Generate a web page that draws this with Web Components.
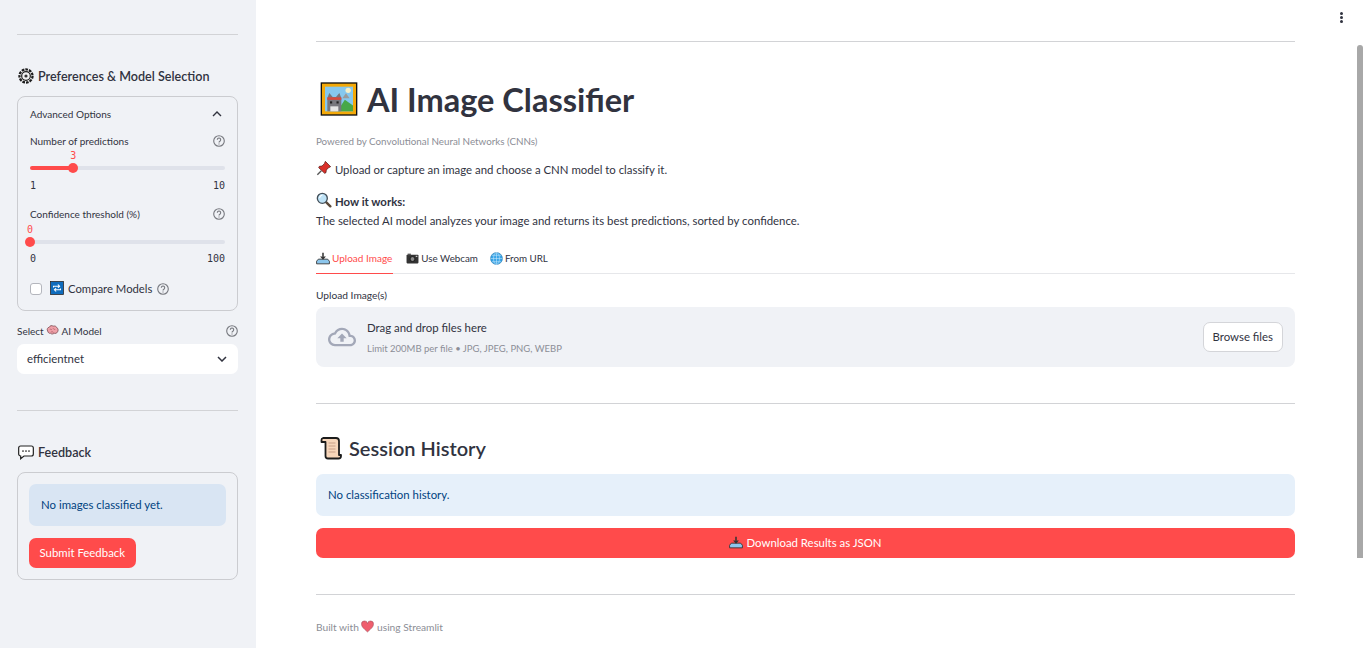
<!DOCTYPE html>
<html lang="en">
<head>
<meta charset="utf-8">
<title>AI Image Classifier</title>
<style>
  html, body { margin: 0; height: 100%; overflow: hidden; }
  body { font-family: "Lato", "Noto Sans", sans-serif; color: #31333f; background: #fff; }
</style>
</head>
<body>
<app-shell>
  <app-sidebar slot="sidebar">
    <app-rule style="margin-top:34px"></app-rule>
    <app-heading icon="gear" size="12.6" line="20" gap="4" pad="1" style="margin-top:31px">Preferences &amp; Model Selection</app-heading>
    <app-panel pad="12" top="10" bottom="14" style="margin-top:10px">
      <app-expander-head>Advanced Options</app-expander-head>
      <app-slider label="Number of predictions" min="1" max="10" value="3" style="margin-top:13px"></app-slider>
      <app-slider label="Confidence threshold (%)" min="0" max="100" value="0" style="margin-top:15px;--label-gap:3px;--ends-gap:9px"></app-slider>
      <app-check style="margin-top:17px"><app-emoji name="repeat" size="14" style="margin-right:4px"></app-emoji>Compare Models</app-check>
    </app-panel>
    <app-select value="efficientnet" style="margin-top:13px">Select <app-emoji name="brain" size="13"></app-emoji> AI Model</app-select>
    <app-rule style="margin-top:36px"></app-rule>
    <app-heading icon="speech" size="12.6" line="20" gap="4" pad="1" style="margin-top:31px">Feedback</app-heading>
    <app-panel pad="11" top="11" bottom="11" style="margin-top:10px">
      <app-alert tone="side">No images classified yet.</app-alert>
      <app-button style="margin-top:12px">Submit Feedback</app-button>
    </app-panel>
  </app-sidebar>

  <app-main slot="main">
    <app-rule style="margin-top:41px"></app-rule>
    <app-title style="margin-top:37px">AI Image Classifier</app-title>
    <app-caption style="margin-top:15px">Powered by Convolutional Neural Networks (CNNs)</app-caption>
    <app-text style="margin-top:12px"><app-emoji name="pin" size="16"></app-emoji> Upload or capture an image and choose a CNN model to classify it.</app-text>
    <app-text style="margin-top:13px"><app-emoji name="lens" size="16"></app-emoji> <b>How it works:</b><br>The selected AI model analyzes your image and returns its best predictions, sorted by confidence.</app-text>
    <app-tabs style="margin-top:14px">
      <app-tab active style="font-size:10px;margin-right:2px"><app-emoji name="tray" size="14"></app-emoji> Upload Image</app-tab>
      <app-tab><app-emoji name="camera" size="13"></app-emoji> Use Webcam</app-tab>
      <app-tab><app-emoji name="globe" size="13"></app-emoji> From URL</app-tab>
    </app-tabs>
    <app-dropzone label="Upload Image(s)" style="margin-top:14px"></app-dropzone>
    <app-rule style="margin-top:36px"></app-rule>
    <app-heading icon="scroll" size="20" line="30" emoji="24" gap="7" pad="2" style="margin-top:29px">Session History</app-heading>
    <app-alert tone="main" style="margin-top:11px">No classification history.</app-alert>
    <app-button wide style="margin-top:12px"><app-emoji name="tray" size="14"></app-emoji> Download Results as JSON</app-button>
    <app-rule style="margin-top:36px"></app-rule>
    <app-caption style="margin-top:25px;font-size:10.200px">Built with <app-emoji name="heart" size="13"></app-emoji> using Streamlit</app-caption>
  </app-main>
</app-shell>

<script>
const EMOJI = {
  gear: `<circle cx="12" cy="12" r="9.800" fill="#fff" stroke="#1d1d1d" stroke-width="3.400" stroke-dasharray="4 1.500"/><circle cx="12" cy="12" r="6.500" fill="#f2f2f2" stroke="#1d1d1d" stroke-width="1.800"/><circle cx="12" cy="12" r="2.400" fill="#333"/>`,
  speech: `<path d="M4 3h16a3 3 0 0 1 3 3v9a3 3 0 0 1-3 3H9l-5 4v-4a3 3 0 0 1-3-3V6a3 3 0 0 1 3-3z" fill="#fff" stroke="#222" stroke-width="1.800"/><circle cx="7.500" cy="10.500" r="1.300" fill="#222"/><circle cx="12" cy="10.500" r="1.300" fill="#222"/><circle cx="16.500" cy="10.500" r="1.300" fill="#222"/>`,
  frame: `<rect x="1" y="2" width="22" height="20" fill="#111"/><rect x="1.800" y="2.800" width="20.400" height="18.400" fill="#f4a908"/><rect x="3.600" y="4.600" width="16.800" height="14.800" fill="#86c8ee"/><path d="M11 19.400l4.500-7 4.900 3.500v3.500z" fill="#47a847"/><circle cx="17.500" cy="6.800" r="1.600" fill="#f5efc8"/><path d="M14 11.500l2.200-3 2.200 3z" fill="#9a9a9a"/><path d="M5 19.400v-8l1.200-3 2 2.400h2l2-2.400 1.200 3v8z" fill="#77777d"/><rect x="5" y="11" width="8.400" height="1.500" fill="#d84a3c"/><rect x="6.600" y="13.400" width="1.300" height="1.300" fill="#222"/><rect x="10.500" y="13.400" width="1.300" height="1.300" fill="#222"/><path d="M6.800 16.400h4.800v3H6.800z" fill="#e5e5e5"/>`,
  pin: `<path d="M14 2l8 8-3 1.500-3.500 3.500-.5 4-2 1L4 11.500l1-2 4-.5L12.500 5.500z" fill="#d9302a" stroke="#4a1512" stroke-width="1"/><path d="M8 16l-6 6" stroke="#555" stroke-width="2"/>`,
  lens: `<path d="M14 14l7.500 7.500" stroke="#5b4a3a" stroke-width="3.600" stroke-linecap="round"/><circle cx="9.500" cy="9.500" r="7.500" fill="#bfe3f7" stroke="#44505a" stroke-width="2"/><path d="M5.500 9a4 4 0 0 1 4-4" stroke="#fff" stroke-width="1.600" fill="none"/>`,
  tray: `<path d="M4 14h16l3 3.500V22H1v-4.500z" fill="#8cc6ec" stroke="#333" stroke-width="1.500"/><path d="M12 3v7" stroke="#333" stroke-width="2.600"/><path d="M7 9.500h10L12 15z" fill="#333"/>`,
  camera: `<rect x="1" y="5" width="22" height="16" rx="1.500" fill="#333"/><rect x="3" y="3" width="6" height="3" fill="#555"/><circle cx="12" cy="13" r="4.500" fill="#8b8b8b" stroke="#111" stroke-width="1.500"/><rect x="18" y="7" width="3" height="2" fill="#ddd"/>`,
  globe: `<circle cx="12" cy="12" r="11" fill="#39a5e8" stroke="#1c6fa8" stroke-width="1"/><path d="M1 12h22M12 1v22M3.500 6h17M3.500 18h17" stroke="#cdeafb" stroke-width="1"/><ellipse cx="12" cy="12" rx="5.500" ry="11" fill="none" stroke="#cdeafb" stroke-width="1"/>`,
  brain: `<path d="M3 13c-2-3 0-7 3-7 1-3 5-4 7-2 3-1 6 0 7 3 3 1 3 6 1 8-1 2-4 3-6 2-2 2-5 2-7 0-2 1-4-1-5-4z" fill="#efa0a8" stroke="#7a4a50" stroke-width="1.400"/><path d="M7 10c2-1 3 0 4 1M13 8c1 2 3 2 4 2M9 15c2-1 4-1 5 1" stroke="#a0525c" stroke-width="1.200" fill="none"/>`,
  repeat: `<rect x="1" y="1" width="22" height="22" fill="#0f6cbd" stroke="#222" stroke-width="1.300"/><path d="M6 11V9h10M13.500 6l3 3-3 3M18 13v2H8M10.500 12l-3 3 3 3" stroke="#fff" stroke-width="1.800" fill="none"/>`,
  scroll: `<path d="M5 2h13a3 3 0 0 1 3 3v14h2v1a2.500 2.500 0 0 1-2.500 2.500H10A2.500 2.500 0 0 1 7.500 20V6H3.500V4A2 2 0 0 1 5 2z" fill="#f7d6ba" stroke="#1c1c1c" stroke-width="1.800" stroke-linejoin="round"/><path d="M10.500 7h7M10.500 10h7M10.500 13h7M10.500 16h7" stroke="#c9a088" stroke-width="1"/>`,
  heart: `<path d="M12 22C5 16 1 12.500 1 8a5.500 5.500 0 0 1 11-1.500A5.500 5.500 0 0 1 23 8c0 4.500-4 8-11 14z" fill="#ef5f6e" stroke="#9a4a55" stroke-width="1"/>`
};

const HELP = `<svg viewBox="0 0 12 12" width="12" height="12" fill="none" stroke="#77797f"><circle cx="6" cy="6" r="5.300" stroke-width="1.100"/><path d="M4.300 4.700a1.700 1.700 0 1 1 2.600 1.500c-.6.400-.9.600-.9 1.200" stroke-width="1.100"/><path d="M6 8.400v1" stroke-width="1.100"/></svg>`;

class AppShell extends HTMLElement {
  connectedCallback() {
    this.attachShadow({ mode: 'open' });
    this.shadowRoot.innerHTML = `
      <style>
        :host { display: flex; height: 100vh; position: relative; }
        .side { flex: 0 0 256px; background: #f0f2f6; }
        .main { flex: 1; min-width: 0; }
        .bar { flex: 0 0 10px; padding: 45px 2px 0 2px; box-sizing: border-box; }
        .thumb { height: 513px; background: #a8a8a8; border-radius: 3px 3px 0 0; }
        .menu { position: absolute; top: 12px; left: 1340px; display: grid; gap: 1px; }
        .menu i { width: 3px; height: 3px; background: #31333f; border-radius: 50%; }
      </style>
      <div class="side"><slot name="sidebar"></slot></div>
      <div class="main"><slot name="main"></slot></div>
      <div class="bar"><div class="thumb"></div></div>
      <div class="menu"><i></i><i></i><i></i></div>
    `;
  }
}

class AppSidebar extends HTMLElement {
  connectedCallback() {
    this.attachShadow({ mode: 'open' });
    this.shadowRoot.innerHTML = `<style>:host { display: block; padding: 0 18px 0 17px; }</style><slot></slot>`;
  }
}

class AppMain extends HTMLElement {
  connectedCallback() {
    this.attachShadow({ mode: 'open' });
    this.shadowRoot.innerHTML = `<style>:host { display: block; padding: 0 60px; }</style><slot></slot>`;
  }
}

class AppRule extends HTMLElement {
  connectedCallback() {
    this.attachShadow({ mode: 'open' });
    this.shadowRoot.innerHTML = `<style>:host { display: block; height: 1px; background: #d2d3d6; }</style>`;
  }
}

class AppEmoji extends HTMLElement {
  connectedCallback() {
    const size = this.getAttribute('size') || 14;
    this.attachShadow({ mode: 'open' });
    this.shadowRoot.innerHTML = `
      <style>:host { display: inline-block; width: ${size}px; height: ${size}px; vertical-align: 2px; margin-block: -4px; }
      svg { display: block; }</style>
      <svg viewBox="0 0 24 24" width="${size}" height="${size}">${EMOJI[this.getAttribute('name')]}</svg>
    `;
  }
}

class AppHeading extends HTMLElement {
  connectedCallback() {
    const size = this.getAttribute('size');
    const line = this.getAttribute('line');
    const emoji = this.getAttribute('emoji') || 16;
    this.attachShadow({ mode: 'open' });
    this.shadowRoot.innerHTML = `
      <style>
        :host { display: flex; align-items: center; gap: ${this.getAttribute('gap')}px; height: ${line}px; font-size: ${size}px; font-weight: 600; padding-left: ${this.getAttribute('pad')}px; }
        .mark { display: flex; }
      </style>
      <span class="mark"><app-emoji name="${this.getAttribute('icon')}" size="${emoji}"></app-emoji></span><span><slot></slot></span>
    `;
  }
}

class AppPanel extends HTMLElement {
  connectedCallback() {
    const pad = this.getAttribute('pad');
    this.attachShadow({ mode: 'open' });
    this.shadowRoot.innerHTML = `
      <style>
        :host { display: block; border: 1px solid #cbccd0; border-radius: 8px; padding: ${this.getAttribute('top')}px ${pad}px ${this.getAttribute('bottom')}px; }
      </style>
      <slot></slot>
    `;
  }
}

class AppExpanderHead extends HTMLElement {
  connectedCallback() {
    this.attachShadow({ mode: 'open' });
    this.shadowRoot.innerHTML = `
      <style>
        :host { display: flex; justify-content: space-between; align-items: center; height: 14px; font-size: 10px; }
        svg { margin-right: 3px; }
      </style>
      <span><slot></slot></span>
      <svg width="10" height="6" viewBox="0 0 10 6" fill="none" stroke="#31333f" stroke-width="1.400"><path d="M1 5l4-4 4 4"/></svg>
    `;
  }
}

class AppSlider extends HTMLElement {
  connectedCallback() {
    const min = +this.getAttribute('min');
    const max = +this.getAttribute('max');
    const value = +this.getAttribute('value');
    const pct = (value - min) / (max - min) * 100;
    this.attachShadow({ mode: 'open' });
    this.shadowRoot.innerHTML = `
      <style>
        :host { display: block; }
        .top { display: flex; justify-content: space-between; align-items: center; height: 14px; font-size: 10px; margin-bottom: var(--label-gap, 2px); }
        .top svg { display: block; }
        .mono { font: 10px/12px "DejaVu Sans Mono", "Liberation Mono", monospace; }
        .value { position: relative; height: 12px; color: #ff4b4b; }
        .value span { position: absolute; left: ${pct}%; transform: translateX(-50%); }
        .track { position: relative; height: 4px; margin: 4px 0 0; border-radius: 2px;
          background: linear-gradient(to right, #ff4b4b ${pct}%, #dfe2ea ${pct}%); }
        .thumb { position: absolute; left: ${pct}%; top: -3px; width: 10px; height: 10px; margin-left: -5px; border-radius: 50%; background: #ff4b4b; }
        .ends { display: flex; justify-content: space-between; margin-top: var(--ends-gap, 10px); color: #31333f; }
      </style>
      <div class="top"><span>${this.getAttribute('label')}</span>${HELP}</div>
      <div class="mono value"><span>${value}</span></div>
      <div class="track"><div class="thumb"></div></div>
      <div class="mono ends"><span>${min}</span><span>${max}</span></div>
    `;
  }
}

class AppCheck extends HTMLElement {
  connectedCallback() {
    this.attachShadow({ mode: 'open' });
    this.shadowRoot.innerHTML = `
      <style>
        :host { display: flex; align-items: center; height: 14px; font-size: 11.300px; }
        .box { width: 10px; height: 10px; border: 1px solid #b4b6bd; border-radius: 3px; background: #fff; margin-right: 8px; }
        .label { margin-top: -2px; }
        .help { margin-left: 5px; display: flex; }
      </style>
      <div class="box"></div><span class="label"><slot></slot></span><span class="help">${HELP}</span>
    `;
  }
}

class AppSelect extends HTMLElement {
  connectedCallback() {
    this.attachShadow({ mode: 'open' });
    this.shadowRoot.innerHTML = `
      <style>
        :host { display: block; }
        .top { display: flex; justify-content: space-between; align-items: center; height: 14px; font-size: 10px; margin-bottom: 6px; }
        .top svg { display: block; }
        .box { display: flex; justify-content: space-between; align-items: center; height: 30px; box-sizing: border-box; background: #fff; border-radius: 7px; padding: 0 11px 2px 10px; font-size: 11.400px; }
        .box svg { margin-top: 2px; }
      </style>
      <div class="top"><span><slot></slot></span>${HELP}</div>
      <div class="box"><span>${this.getAttribute('value')}</span>
        <svg width="10" height="6" viewBox="0 0 10 6" fill="none" stroke="#31333f" stroke-width="1.500"><path d="M1 1l4 4 4-4"/></svg></div>
    `;
  }
}

class AppAlert extends HTMLElement {
  connectedCallback() {
    const side = this.getAttribute('tone') === 'side';
    this.attachShadow({ mode: 'open' });
    this.shadowRoot.innerHTML = `
      <style>
        :host { display: flex; align-items: center; height: 42px; box-sizing: border-box; border-radius: 7px; padding: 0 12px 2px;
          font-size: 11.400px; color: #004280; background: ${side ? '#d9e5f3' : '#e6f0fa'}; }
      </style>
      <slot></slot>
    `;
  }
}

class AppButton extends HTMLElement {
  connectedCallback() {
    const wide = this.hasAttribute('wide');
    this.attachShadow({ mode: 'open' });
    this.shadowRoot.innerHTML = `
      <style>
        :host { display: ${wide ? 'flex' : 'inline-flex'}; justify-content: center; align-items: center; gap: 3px; height: 30px; box-sizing: border-box;
          padding: 0 10.500px 2px; border-radius: 7px; background: #ff4b4b; color: #fff; font-size: 11.400px; font-weight: 400; }
      </style>
      <slot></slot>
    `;
  }
}

class AppTitle extends HTMLElement {
  connectedCallback() {
    this.attachShadow({ mode: 'open' });
    this.shadowRoot.innerHTML = `
      <style>
        :host { display: flex; align-items: center; gap: 8px; height: 40px; font-size: 32.500px; font-weight: 700; padding-left: 3px; }
        .mark { display: flex; }
      </style>
      <span class="mark"><app-emoji name="frame" size="40"></app-emoji></span><span><slot></slot></span>
    `;
  }
}

class AppCaption extends HTMLElement {
  connectedCallback() {
    this.attachShadow({ mode: 'open' });
    this.shadowRoot.innerHTML = `<style>:host { display: block; font-size: 9.800px; line-height: 14px; color: #8c8e96; }</style><slot></slot>`;
  }
}

class AppText extends HTMLElement {
  connectedCallback() {
    this.attachShadow({ mode: 'open' });
    this.shadowRoot.innerHTML = `<style>:host { display: block; font-size: 11.400px; line-height: 19px; }</style><slot></slot>`;
  }
}

class AppTabs extends HTMLElement {
  connectedCallback() {
    this.attachShadow({ mode: 'open' });
    this.shadowRoot.innerHTML = `
      <style>:host { display: flex; gap: 11px; border-bottom: 1px solid #e6e7ea; height: 29px; }</style>
      <slot></slot>
    `;
  }
}

class AppTab extends HTMLElement {
  connectedCallback() {
    const active = this.hasAttribute('active');
    this.attachShadow({ mode: 'open' });
    this.shadowRoot.innerHTML = `
      <style>
        :host { display: flex; align-items: center; gap: 2px; height: 28px; padding: 0 1px 1px 0; font-size: 9.800px;
          color: ${active ? '#ff4b4b' : '#31333f'}; ${active ? 'box-shadow: 0 1px 0 #ff4b4b;' : ''} }
      </style>
      <slot></slot>
    `;
  }
}

class AppDropzone extends HTMLElement {
  connectedCallback() {
    this.attachShadow({ mode: 'open' });
    this.shadowRoot.innerHTML = `
      <style>
        :host { display: block; }
        .label { height: 14px; line-height: 14px; font-size: 10.200px; margin-bottom: 5px; }
        .zone { display: flex; align-items: center; height: 60px; padding: 0 12px; background: #f0f2f6; border-radius: 8px; }
        .cloud { margin-right: 11px; display: block; }
        .copy { flex: 1; }
        .drag { font-size: 11.400px; line-height: 16px; margin-bottom: 6px; margin-top: 2px; }
        .limit { font-size: 9.500px; line-height: 14px; color: #8c8e96; }
        .browse { height: 30px; box-sizing: border-box; padding: 0 9px 2px; display: flex; align-items: center; background: #fff; border: 1px solid #d4d5d9; border-radius: 7px; font-size: 11.400px; }
      </style>
      <div class="label">${this.getAttribute('label')}</div>
      <div class="zone">
        <svg class="cloud" viewBox="0 0 24 24" width="28" height="28" fill="#a3a8b8"><path d="M19.35 10.04C18.67 6.59 15.64 4 12 4 9.11 4 6.6 5.64 5.35 8.04 2.34 8.36 0 10.91 0 14c0 3.31 2.69 6 6 6h13c2.76 0 5-2.24 5-5 0-2.64-2.05-4.78-4.65-4.96zM19 18H6c-2.21 0-4-1.79-4-4 0-2.05 1.53-3.76 3.56-3.97l1.07-.11.5-.95C8.08 7.14 9.94 6 12 6c2.62 0 4.88 1.86 5.39 4.43l.3 1.5 1.53.11c1.56.1 2.78 1.41 2.78 2.96 0 1.65-1.35 3-3 3zM8 13h2.55v3h2.9v-3H16l-4-4z"/></svg>
        <div class="copy"><div class="drag">Drag and drop files here</div><div class="limit">Limit 200MB per file • JPG, JPEG, PNG, WEBP</div></div>
        <div class="browse">Browse files</div>
      </div>
    `;
  }
}

customElements.define('app-shell', AppShell);
customElements.define('app-sidebar', AppSidebar);
customElements.define('app-main', AppMain);
customElements.define('app-rule', AppRule);
customElements.define('app-emoji', AppEmoji);
customElements.define('app-heading', AppHeading);
customElements.define('app-panel', AppPanel);
customElements.define('app-expander-head', AppExpanderHead);
customElements.define('app-slider', AppSlider);
customElements.define('app-check', AppCheck);
customElements.define('app-select', AppSelect);
customElements.define('app-alert', AppAlert);
customElements.define('app-button', AppButton);
customElements.define('app-title', AppTitle);
customElements.define('app-caption', AppCaption);
customElements.define('app-text', AppText);
customElements.define('app-tabs', AppTabs);
customElements.define('app-tab', AppTab);
customElements.define('app-dropzone', AppDropzone);
</script>
</body>
</html>
